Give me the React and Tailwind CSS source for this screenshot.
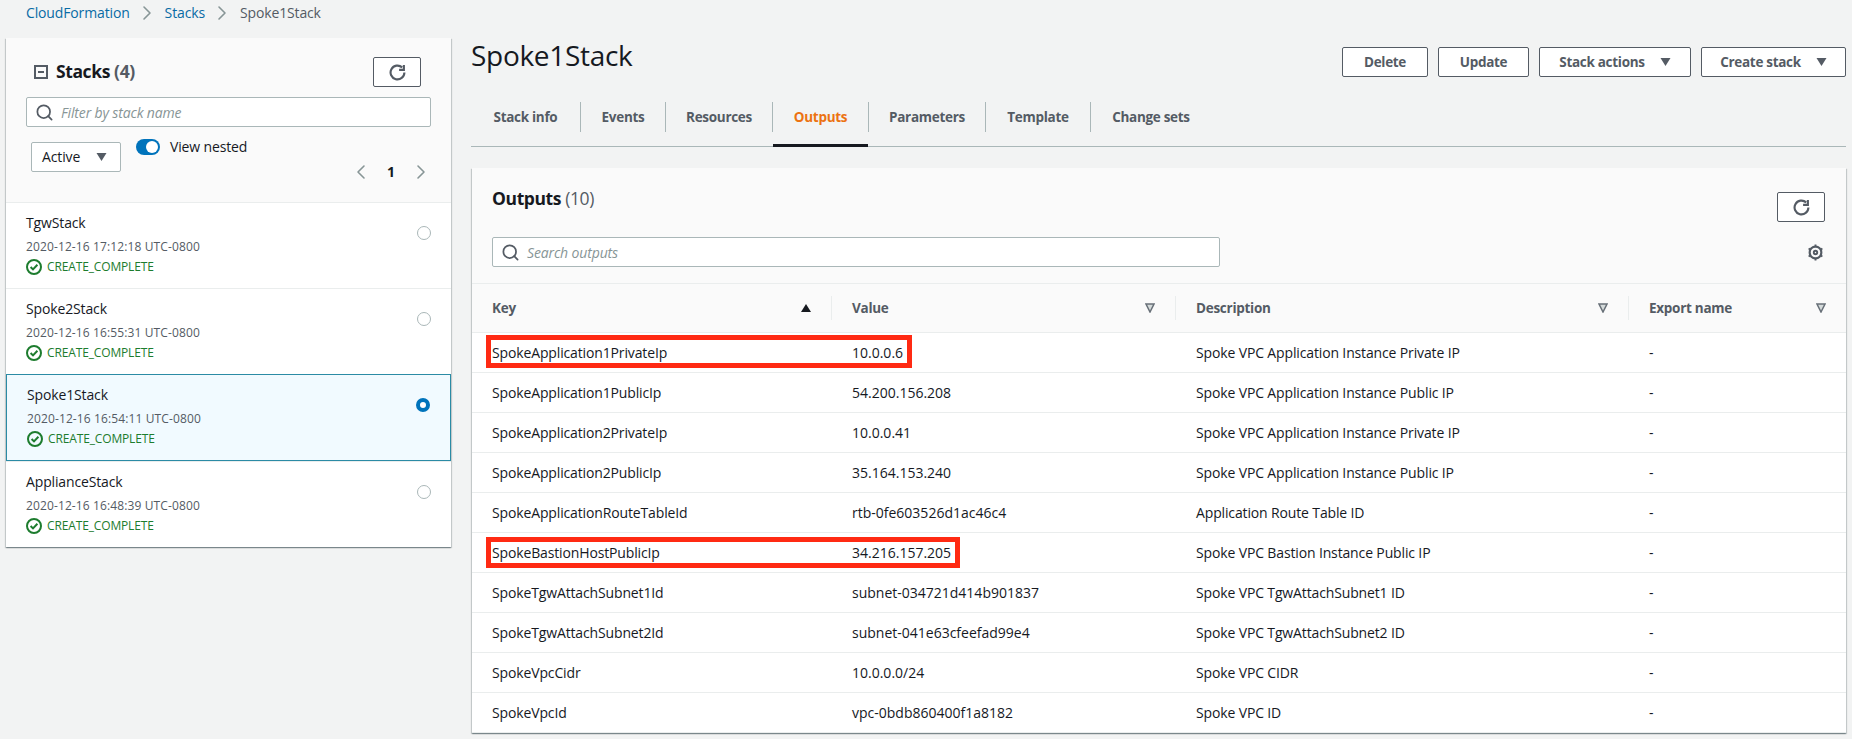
import { ChevronLeft, ChevronRight, Search } from "lucide-react";

const stacks = [
  { name: "TgwStack", date: "2020-12-16 17:12:18 UTC-0800" },
  { name: "Spoke2Stack", date: "2020-12-16 16:55:31 UTC-0800" },
  { name: "Spoke1Stack", date: "2020-12-16 16:54:11 UTC-0800", selected: true },
  { name: "ApplianceStack", date: "2020-12-16 16:48:39 UTC-0800" },
];

const tabs = [
  { label: "Stack info", width: "w-[110px]" },
  { label: "Events", width: "w-[85px]" },
  { label: "Resources", width: "w-[107px]" },
  { label: "Outputs", width: "w-[96px]", active: true },
  { label: "Parameters", width: "w-[117px]" },
  { label: "Template", width: "w-[105px]" },
  { label: "Change sets", width: "w-[120px]", last: true },
];

const outputs = [
  ["SpokeApplication1PrivateIp", "10.0.0.6", "Spoke VPC Application Instance Private IP", "w-[426px] h-[33px] top-[2px]"],
  ["SpokeApplication1PublicIp", "54.200.156.208", "Spoke VPC Application Instance Public IP"],
  ["SpokeApplication2PrivateIp", "10.0.0.41", "Spoke VPC Application Instance Private IP"],
  ["SpokeApplication2PublicIp", "35.164.153.240", "Spoke VPC Application Instance Public IP"],
  ["SpokeApplicationRouteTableId", "rtb-0fe603526d1ac46c4", "Application Route Table ID"],
  ["SpokeBastionHostPublicIp", "34.216.157.205", "Spoke VPC Bastion Instance Public IP", "w-[474px] h-[31px] top-[4px]"],
  ["SpokeTgwAttachSubnet1Id", "subnet-034721d414b901837", "Spoke VPC TgwAttachSubnet1 ID"],
  ["SpokeTgwAttachSubnet2Id", "subnet-041e63cfeefad99e4", "Spoke VPC TgwAttachSubnet2 ID"],
  ["SpokeVpcCidr", "10.0.0.0/24", "Spoke VPC CIDR"],
  ["SpokeVpcId", "vpc-0bdb860400f1a8182", "Spoke VPC ID"],
];

const RefreshIcon = () => (
  <svg viewBox="0 0 16 16" className="w-[17px] h-[17px]" fill="none" stroke="#545b64" strokeWidth="2">
    <path d="M14.5 8A6.5 6.5 0 1 1 12.4 3.2" />
    <path d="M9.5 5.5H14V1" />
  </svg>
);

const GearIcon = () => (
  <svg viewBox="0 0 16 16" className="w-[17px] h-[17px]" fill="none" stroke="#545b64" strokeWidth="2">
    <circle cx="8" cy="8" r="5.5" />
    <circle cx="8" cy="8" r="1.6" strokeWidth="1.8" />
    <path d="M8 .5v2M8 13.5v2M1.5 4.2l1.7 1M12.8 10.8l1.7 1M1.5 11.8l1.7-1M12.8 5.2l1.7-1" strokeWidth="1.8" />
  </svg>
);

const StatusIcon = () => (
  <svg viewBox="0 0 16 16" className="w-4 h-4" fill="none" stroke="#1d7c2e" strokeWidth="2">
    <circle cx="8" cy="8" r="7" />
    <path d="M4.6 8l2.4 2.4 4.4-4.6" />
  </svg>
);

const Caret = ({ className = "" }) => (
  <svg viewBox="0 0 10 8" className={`w-[11px] h-[8px] ${className}`} fill="#545b64">
    <path d="M0 0h10L5 8z" />
  </svg>
);

const FilterArrow = () => (
  <svg viewBox="0 0 10 10" className="w-[10px] h-[10px]" fill="#d5dbdb" stroke="#687078" strokeWidth="1.5">
    <path d="M1 1h8L5 9z" />
  </svg>
);

const RefreshButton = ({ className = "" }) => (
  <button className={`w-[48px] h-[30px] bg-white border border-[#545b64] rounded-[2px] flex items-center justify-center ${className}`}>
    <RefreshIcon />
  </button>
);

const ActionButton = ({ label, caret, width }) => (
  <button className={`${width} h-[30px] bg-white border border-[#545b64] rounded-[2px] flex items-center justify-center gap-[15px] text-[13.5px] tracking-[-0.3px] font-bold text-[#545b64]`}>
    {label}
    {caret && <Caret />}
  </button>
);

const StackRow = ({ stack }) => (
  <div
    className={
      stack.selected
        ? "h-[87px] flex justify-between pl-[20px] pr-[20px] pt-[10px] bg-[#f1faff] border border-[#2b8ba5]"
        : "h-[86px] flex justify-between pl-[20px] pr-[20px] pt-[10px] bg-white border-t border-[#eaeded]"
    }
  >
    <div>
      <div className="text-sm leading-5 text-[#16191f]">{stack.name}</div>
      <div className="mt-[6px] text-xs leading-4 tracking-[0.12px] text-[#545b64]">{stack.date}</div>
      <div className="mt-[4px] flex items-center gap-[5px] text-xs leading-4 text-[#1d7c2e]">
        <StatusIcon />
        CREATE_COMPLETE
      </div>
    </div>
    {stack.selected ? (
      <span className="mt-[13px] w-[14px] h-[14px] rounded-full border-[4px] border-[#0073bb] bg-white" />
    ) : (
      <span className="mt-[13px] w-[14px] h-[14px] rounded-full border border-[#aab7b8] bg-white" />
    )}
  </div>
);

const StacksPanel = () => (
  <div className="shadow-[0_1px_1px_0_rgba(0,28,36,0.3),1px_1px_1px_0_rgba(0,28,36,0.15),-1px_1px_1px_0_rgba(0,28,36,0.15)]">
    <div className="h-[164px] bg-[#fafafa] px-[20px] pt-[19px]">
      <div className="flex items-center justify-between pr-[10px]">
        <div className="flex items-center ml-[8px]">
          <svg viewBox="0 0 14 14" className="w-[14px] h-[14px]" fill="none" stroke="#545b64" strokeWidth="2">
            <path d="M1 1h12v12H1zM4 7h6" />
          </svg>
          <h2 className="ml-[8px] mb-[2px] text-[17.5px] tracking-[-0.4px] leading-6 font-bold text-[#16191f]">
            Stacks <span className="text-[#545b64]">(4)</span>
          </h2>
        </div>
        <RefreshButton />
      </div>
      <div className="mt-[10px] h-[30px] bg-white border border-[#aab7b8] rounded-[2px] flex items-center pl-[8px]">
        <Search className="w-[19px] h-[19px] text-[#545b64]" strokeWidth={2.2} />
        <span className="ml-[7px] pt-[2px] text-sm italic text-[#879596]">Filter by stack name</span>
      </div>
      <div className="mt-[12px] flex justify-between">
        <div className="flex items-start">
          <div className="ml-[5px] mt-[3px] w-[90px] h-[30px] bg-white border border-[#aab7b8] rounded-[2px] flex items-center justify-between pl-[10px] pr-[13px] text-sm text-[#16191f]">
            Active
            <Caret />
          </div>
          <div className="ml-[15px] w-[24px] h-[16px] rounded-full bg-[#0073bb] flex items-center justify-end pr-[2px]">
            <span className="w-[12px] h-[12px] rounded-full bg-white" />
          </div>
          <span className="ml-[10px] text-sm leading-4 text-[#16191f]">View nested</span>
        </div>
        <div className="mt-[21px] -mr-[2px] flex items-center text-[#879596]">
          <ChevronLeft className="w-6 h-6" strokeWidth={1.6} />
          <span className="w-[36px] text-center text-sm leading-5 font-bold text-[#16191f]">1</span>
          <ChevronRight className="w-6 h-6" strokeWidth={1.6} />
        </div>
      </div>
    </div>
    {stacks.map((stack) => (
      <StackRow key={stack.name} stack={stack} />
    ))}
  </div>
);

const HeaderCell = ({ label, arrow, border }) => (
  <div className={`h-[24px] flex items-center justify-between pl-[20px] pr-[20px] text-[13.5px] tracking-[-0.27px] font-bold text-[#545b64] ${border ? "border-r border-[#eaeded]" : ""}`}>
    {label}
    {arrow}
  </div>
);

const OutputRow = ({ row }) => (
  <div className="relative h-[40px] grid grid-cols-[360px_344px_453px_217px] items-center bg-white border-b border-[#eaeded] text-sm text-[#16191f]">
    <div className="pl-[20px]">{row[0]}</div>
    <div className="pl-[20px] tracking-normal">{row[1]}</div>
    <div className="pl-[20px]">{row[2]}</div>
    <div className="pl-[20px]">-</div>
    {row[3] && <span className={`absolute left-[14px] border-[5px] border-[#ff2a13] ${row[3]}`} />}
  </div>
);

const OutputsPanel = () => (
  <div className="mt-[21px] ml-[1px] w-[1374px] shadow-[0_1px_1px_0_rgba(0,28,36,0.3),1px_1px_1px_0_rgba(0,28,36,0.15),-1px_1px_1px_0_rgba(0,28,36,0.15)]">
    <div className="h-[116px] bg-[#fafafa] border-b border-[#eaeded] pl-[20px]">
      <div className="pt-[18px] flex justify-between items-start pr-[21px]">
        <h2 className="text-[17.5px] tracking-[-0.4px] leading-6 font-bold text-[#16191f]">
          Outputs <span className="font-normal text-[#545b64]">(10)</span>
        </h2>
        <RefreshButton className="mt-[6px]" />
      </div>
      <div className="mt-[15px] flex items-center justify-between pr-[22px]">
        <div className="w-[728px] h-[30px] bg-white border border-[#aab7b8] rounded-[2px] flex items-center pl-[8px]">
          <Search className="w-[19px] h-[19px] text-[#545b64]" strokeWidth={2.2} />
          <span className="ml-[7px] pt-[2px] text-sm italic text-[#879596]">Search outputs</span>
        </div>
        <GearIcon />
      </div>
    </div>
    <div className="h-[49px] grid grid-cols-[360px_344px_453px_217px] items-center bg-[#fafafa] border-b border-[#eaeded]">
      <HeaderCell
        label="Key"
        border
        arrow={
          <svg viewBox="0 0 10 8" className="w-[10px] h-[8px]" fill="#16191f">
            <path d="M0 8h10L5 0z" />
          </svg>
        }
      />
      <HeaderCell label="Value" border arrow={<FilterArrow />} />
      <HeaderCell label="Description" border arrow={<FilterArrow />} />
      <HeaderCell label="Export name" arrow={<FilterArrow />} />
    </div>
    {outputs.map((row) => (
      <OutputRow key={row[0]} row={row} />
    ))}
  </div>
);

export default function App() {
  return (
    <div className="w-[1852px] h-[739px] overflow-hidden bg-[#f2f3f3] flex tracking-[-0.14px] font-['Open_Sans','Noto_Sans',sans-serif]">
      <div className="w-[445px] ml-[6px]">
        <nav className="h-[38px] pb-[12px] flex items-center text-sm">
          <span className="ml-[20px] text-[#086ba5]">CloudFormation</span>
          <ChevronRight className="w-6 h-6 mx-[5.5px] text-[#879596]" strokeWidth={1.6} />
          <span className="text-[#086ba5]">Stacks</span>
          <ChevronRight className="w-6 h-6 mx-[5.5px] text-[#879596]" strokeWidth={1.6} />
          <span className="text-[#545b64]">Spoke1Stack</span>
        </nav>
        <StacksPanel />
      </div>
      <div className="w-[1375px] ml-[20px]">
        <div className="pt-[38px] flex justify-between items-start">
          <h1 className="text-[28px] leading-[34px] tracking-[-0.3px] font-normal text-[#16191f]">Spoke1Stack</h1>
          <div className="mt-[9px] flex gap-[10px]">
            <ActionButton label="Delete" width="w-[86px]" />
            <ActionButton label="Update" width="w-[91px]" />
            <ActionButton label="Stack actions" caret width="w-[152px]" />
            <ActionButton label="Create stack" caret width="w-[145px]" />
          </div>
        </div>
        <div className="mt-[25px] h-[45px] border-b border-[#aab7b8] flex">
          {tabs.map((tab) => (
            <div
              key={tab.label}
              className={`${tab.width} relative h-[30px] flex items-center justify-center text-[13.5px] tracking-[-0.3px] font-bold ${tab.last ? "" : "border-r border-[#aab7b8]"} ${tab.active ? "text-[#ec7211]" : "text-[#545b64]"}`}
            >
              {tab.label}
              {tab.active && <span className="absolute left-0 right-0 top-[42px] h-[3px] bg-[#16191f]" />}
            </div>
          ))}
        </div>
        <OutputsPanel />
      </div>
    </div>
  );
}
